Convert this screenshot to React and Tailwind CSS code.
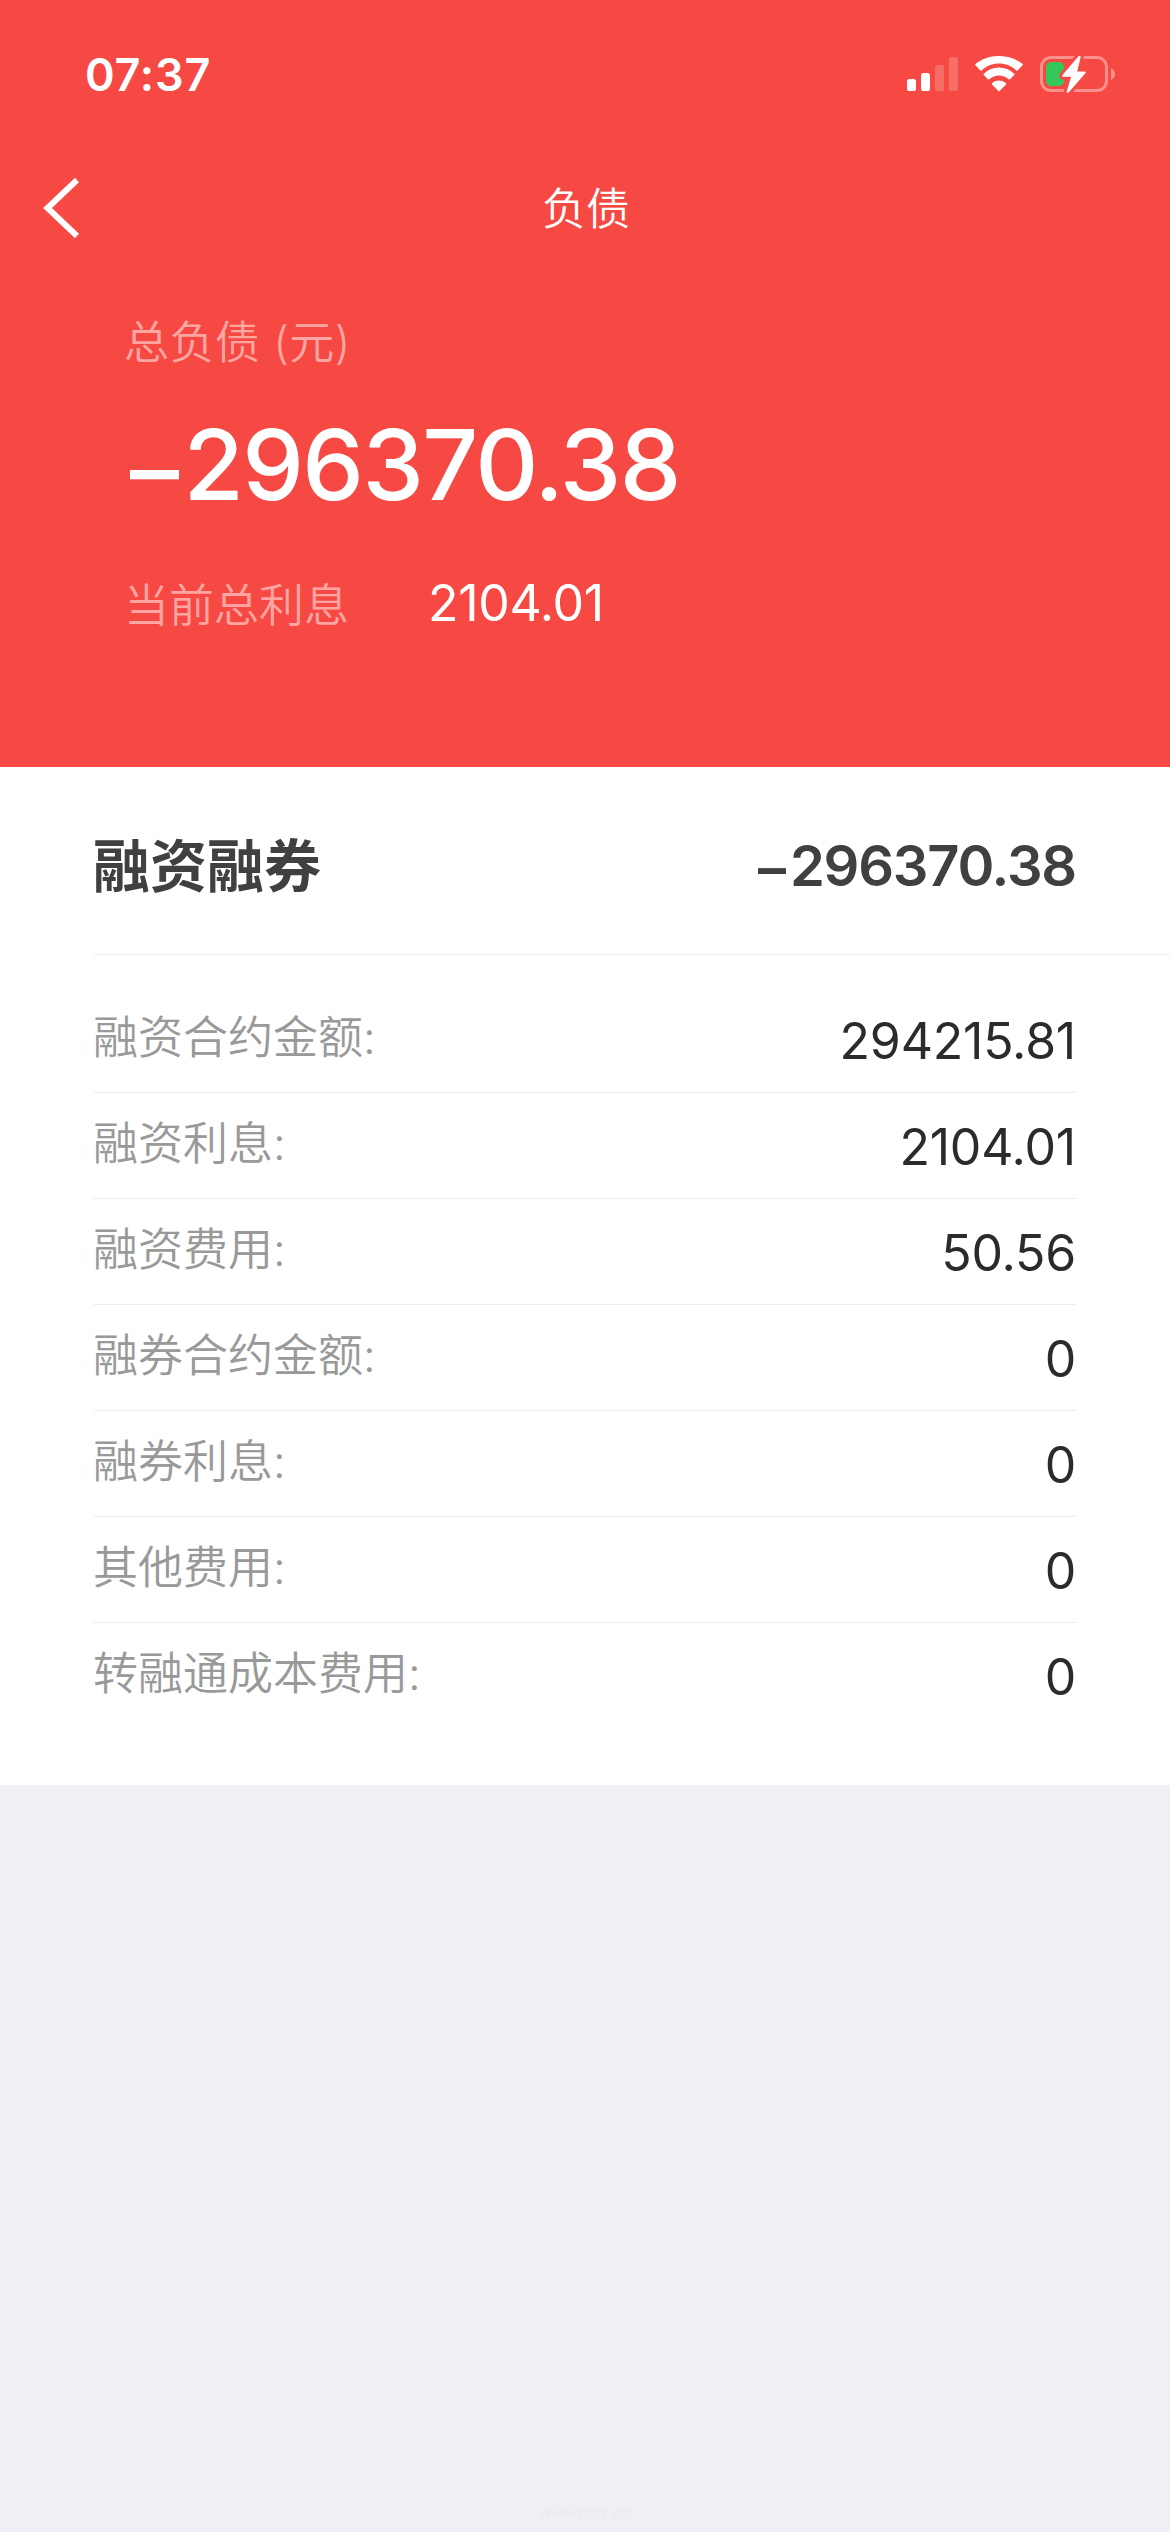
const ROWS = [
  { label: '融资合约金额:', value: '294215.81' },
  { label: '融资利息:', value: '2104.01' },
  { label: '融资费用:', value: '50.56' },
  { label: '融券合约金额:', value: '0' },
  { label: '融券利息:', value: '0' },
  { label: '其他费用:', value: '0' },
  { label: '转融通成本费用:', value: '0' },
];

function SignalIcon() {
  return (
    <svg width="51" height="34" viewBox="0 0 51 34" fill="#fff">
      <rect x="0" y="22" width="9" height="12" rx="2.6" />
      <rect x="14" y="16" width="9" height="18" rx="2.6" />
      <rect x="28" y="8" width="9" height="26" rx="2.6" opacity="0.2" />
      <rect x="42" y="0" width="9" height="34" rx="2.6" opacity="0.2" />
    </svg>
  );
}

function WifiIcon() {
  return (
    <svg width="48" height="36" viewBox="0 0 48 36" fill="#fff">
      <path d="M24 7.5c6.6 0 12.700 2.500 17.300 6.900.35.330.9.330 1.240 0l5.100-5.050c.36-.36.36-.94 0-1.300C34.400-2.700 13.600-2.700.36 8.050c-.36.36-.36.94 0 1.300l5.100 5.050c.34.330.9.330 1.240 0C11.300 10 17.400 7.500 24 7.500z" />
      <path d="M24 19.500c3.600 0 7.100 1.350 9.750 3.800.36.350.930.340 1.280-.01l4.200-4.250c.36-.37.36-.96-.02-1.320-8.560-8.200-21.860-8.200-30.420 0-.38.36-.38.95-.02 1.320l4.200 4.250c.35.350.92.360 1.280.01 2.650-2.450 6.150-3.800 9.750-3.800z" />
      <path d="M31 27.200c.38.360.37.960 0 1.330l-6.350 6.500c-.35.380-.95.380-1.300 0l-6.350-6.500c-.37-.37-.38-.97 0-1.330 4.050-3.500 9.950-3.500 14 0z" />
    </svg>
  );
}

function BatteryIcon() {
  return (
    <svg width="75" height="38" viewBox="0 0 75 38" overflow="visible">
      <rect x="1.500" y="2.500" width="65" height="33" rx="9.500" fill="none" stroke="#fff" strokeOpacity="0.4" strokeWidth="3" />
      <path d="M71 13v12c2.400-1 4-3.400 4-6s-1.600-5-4-6z" fill="#fff" fillOpacity="0.4" />
      <rect x="6" y="7" width="18" height="24" rx="5" fill="#34c759" />
      <path
        d="M38.500 1.200 22.500 19.900c-.8 1-.4 1.900.8 1.900h7.800L26.800 36.200c-.5 1.700 1 2.300 2.100 1L45.400 18.300c.8-1 .4-1.900-.8-1.900h-7.400L40.600 2.400c.3-1.600-1.100-2.300-2.100-1.200z"
        fill="#fff"
        stroke="#f64943"
        strokeWidth="6"
        paintOrder="stroke"
      />
    </svg>
  );
}

function StatusBar() {
  return (
    <div className="flex h-[150px] items-start justify-between pl-[85px] pr-[55px] pt-[52px]">
      <span className="text-[45px] font-semibold leading-[45px] tracking-[0.8px]">07:37</span>
      <div className="flex items-center pt-[3px]">
        <SignalIcon />
        <div className="ml-[17px]"><WifiIcon /></div>
        <div className="ml-[17px]"><BatteryIcon /></div>
      </div>
    </div>
  );
}

function NavBar() {
  return (
    <div className="grid h-[116px] grid-cols-3 items-center px-[43px]">
      <svg width="38" height="60" viewBox="0 0 38 60" fill="none" stroke="#fff" strokeWidth="6">
        <path d="M34 2 4.500 30 34 58" />
      </svg>
      <h1 className="pl-[2px] pt-[1px] text-center text-[44px] font-[350] leading-[60px]">负债</h1>
    </div>
  );
}

export default function App() {
  return (
    <div className="min-h-[2532px] w-full bg-[#f1eef5] font-['Inter','Noto_Sans_CJK_SC',sans-serif] flex flex-col">
      <header className="h-[767px] bg-[#f64943] text-white">
        <StatusBar />
        <NavBar />
        <div className="px-[124px] pt-[45px]">
          <div className="text-[45px] font-[350] leading-[64px] tracking-[0.4px] text-[#ffa5a2]">总负债 (元)</div>
          <div className="mt-[41px] pl-[6px] text-[98px] font-medium leading-[98px] tracking-[-1.6px] [font-feature-settings:'calt'_0]">
            <span className="mr-[6px] inline-block translate-y-[5px]">–</span>296370.38
          </div>
          <div className="mt-[60px] flex items-center">
            <span className="w-[304px] text-[45px] font-[350] leading-[64px] text-[#ffa5a2]">当前总利息</span>
            <span className="-mt-[6px] text-[50px] leading-[64px] tracking-[-0.3px]">2104.01</span>
          </div>
        </div>
      </header>

      <main className="h-[1018px] bg-white pl-[94px]">
        <div className="flex h-[188px] items-center justify-between border-b border-[#ececec] pr-[94px] pt-[12px] font-semibold text-[#404040]">
          <h2 className="-ml-px text-[57px] font-bold leading-[80px]">融资融券</h2>
          <span className="-mt-[2px] text-[56px] leading-[80px] tracking-[-1.2px] [font-feature-settings:'calt'_0]">
            <span className="mr-[5px] inline-block translate-y-[2px]">–</span>296370.38
          </span>
        </div>
        <ul className="mr-[94px] pt-[32px]">
          {ROWS.map((row) => (
            <li
              key={row.label}
              className="flex h-[106px] items-center justify-between border-b border-[#ececec] last:border-b-0"
            >
              <span className="-ml-px mb-[4px] text-[45px] font-[350] leading-[64px] text-[#999]">{row.label}</span>
              <span className="mt-[2px] text-[50px] leading-[64px] tracking-[-0.2px] text-[#2b2b2b]">{row.value}</span>
            </li>
          ))}
        </ul>
      </main>

      <footer className="mt-auto pb-[8px] text-center font-['Open_Sans',sans-serif] text-[15px] leading-[24px] text-[#ebebeb]">
        www.ddrj.vip
      </footer>
    </div>
  );
}
